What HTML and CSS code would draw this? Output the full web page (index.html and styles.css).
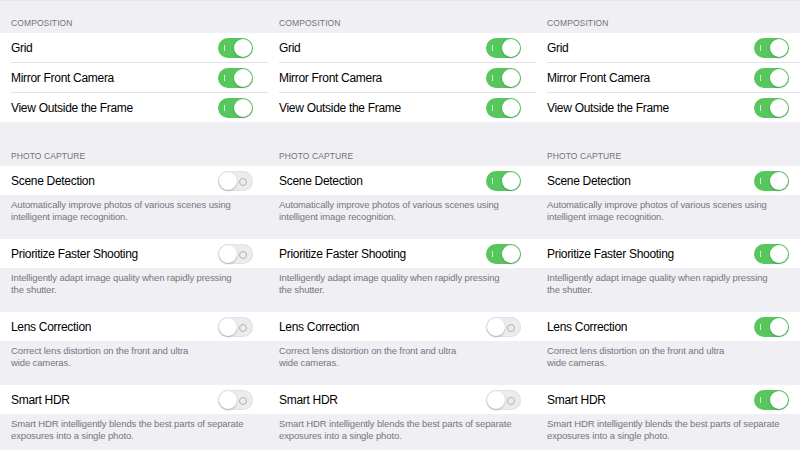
FILE: index.html
```html
<!DOCTYPE html>
<html>
<head>
<meta charset="utf-8">
<link rel="stylesheet" href="styles.css">
</head>
<body>
<div class="screen">
  <div class="col">
    <div class="hdr hdr-first">COMPOSITION</div>
    <div class="group">
      <div class="row"><div class="inner"><span class="label">Grid</span><span class="tg on"><span class="knob"></span></span></div></div>
      <div class="row"><div class="inner"><span class="label">Mirror Front Camera</span><span class="tg on"><span class="knob"></span></span></div></div>
      <div class="row"><div class="inner"><span class="label">View Outside the Frame</span><span class="tg on"><span class="knob"></span></span></div></div>
    </div>
    <div class="hdr hdr-second">PHOTO CAPTURE</div>
    <div class="row single"><div class="inner"><span class="label">Scene Detection</span><span class="tg off"><span class="knob"></span></span></div></div>
    <div class="desc">Automatically improve photos of various scenes using<br>intelligent image recognition.</div>
    <div class="row single"><div class="inner"><span class="label">Prioritize Faster Shooting</span><span class="tg off"><span class="knob"></span></span></div></div>
    <div class="desc">Intelligently adapt image quality when rapidly pressing<br>the shutter.</div>
    <div class="row single"><div class="inner"><span class="label">Lens Correction</span><span class="tg off"><span class="knob"></span></span></div></div>
    <div class="desc">Correct lens distortion on the front and ultra<br>wide cameras.</div>
    <div class="row single"><div class="inner"><span class="label">Smart HDR</span><span class="tg off"><span class="knob"></span></span></div></div>
    <div class="desc">Smart HDR intelligently blends the best parts of separate<br>exposures into a single photo.</div>
  </div>

  <div class="col">
    <div class="hdr hdr-first">COMPOSITION</div>
    <div class="group">
      <div class="row"><div class="inner"><span class="label">Grid</span><span class="tg on"><span class="knob"></span></span></div></div>
      <div class="row"><div class="inner"><span class="label">Mirror Front Camera</span><span class="tg on"><span class="knob"></span></span></div></div>
      <div class="row"><div class="inner"><span class="label">View Outside the Frame</span><span class="tg on"><span class="knob"></span></span></div></div>
    </div>
    <div class="hdr hdr-second">PHOTO CAPTURE</div>
    <div class="row single"><div class="inner"><span class="label">Scene Detection</span><span class="tg on"><span class="knob"></span></span></div></div>
    <div class="desc">Automatically improve photos of various scenes using<br>intelligent image recognition.</div>
    <div class="row single"><div class="inner"><span class="label">Prioritize Faster Shooting</span><span class="tg on"><span class="knob"></span></span></div></div>
    <div class="desc">Intelligently adapt image quality when rapidly pressing<br>the shutter.</div>
    <div class="row single"><div class="inner"><span class="label">Lens Correction</span><span class="tg off"><span class="knob"></span></span></div></div>
    <div class="desc">Correct lens distortion on the front and ultra<br>wide cameras.</div>
    <div class="row single"><div class="inner"><span class="label">Smart HDR</span><span class="tg off"><span class="knob"></span></span></div></div>
    <div class="desc">Smart HDR intelligently blends the best parts of separate<br>exposures into a single photo.</div>
  </div>

  <div class="col">
    <div class="hdr hdr-first">COMPOSITION</div>
    <div class="group">
      <div class="row"><div class="inner"><span class="label">Grid</span><span class="tg on"><span class="knob"></span></span></div></div>
      <div class="row"><div class="inner"><span class="label">Mirror Front Camera</span><span class="tg on"><span class="knob"></span></span></div></div>
      <div class="row"><div class="inner"><span class="label">View Outside the Frame</span><span class="tg on"><span class="knob"></span></span></div></div>
    </div>
    <div class="hdr hdr-second">PHOTO CAPTURE</div>
    <div class="row single"><div class="inner"><span class="label">Scene Detection</span><span class="tg on"><span class="knob"></span></span></div></div>
    <div class="desc">Automatically improve photos of various scenes using<br>intelligent image recognition.</div>
    <div class="row single"><div class="inner"><span class="label">Prioritize Faster Shooting</span><span class="tg on"><span class="knob"></span></span></div></div>
    <div class="desc">Intelligently adapt image quality when rapidly pressing<br>the shutter.</div>
    <div class="row single"><div class="inner"><span class="label">Lens Correction</span><span class="tg on"><span class="knob"></span></span></div></div>
    <div class="desc">Correct lens distortion on the front and ultra<br>wide cameras.</div>
    <div class="row single"><div class="inner"><span class="label">Smart HDR</span><span class="tg on"><span class="knob"></span></span></div></div>
    <div class="desc">Smart HDR intelligently blends the best parts of separate<br>exposures into a single photo.</div>
  </div>
</div>
</body>
</html>
```
FILE: styles.css
```css
* { box-sizing: border-box; margin: 0; padding: 0; }
html, body { width: 800px; height: 450px; overflow: hidden; }
body {
  background: #efeff4;
  font-family: "Liberation Sans", Arial, sans-serif;
  color: #000;
}
.screen {
  display: flex;
  width: 800px;
  height: 450px;
  overflow: hidden;
  border-top: 1px solid #e4e4e9;
}
.col {
  flex: 0 0 268px;
  width: 268px;
  display: flex;
  flex-direction: column;
}
.col > * { flex-shrink: 0; }
.hdr {
  display: flex;
  align-items: flex-end;
  padding-left: 11px;
  font-size: 8.5px;
  letter-spacing: 0.1px;
  color: #737378;
  line-height: 11px;
}
.hdr-first { height: 32px; padding-bottom: 4px; }
.hdr-second { height: 44px; padding-bottom: 4px; }
.group { background: #fff; }
.row {
  background: #fff;
  padding-left: 11px;
  height: 30px;
}
.row.single { height: 29px; }
.inner {
  height: 100%;
  display: flex;
  align-items: center;
  justify-content: space-between;
  padding-right: 15px;
  border-bottom: 1px solid #e3e3e7;
}
.group .row:last-child { height: 29px; }
.group .row:last-child .inner, .row.single .inner { border-bottom: none; }
.label { font-size: 12px; letter-spacing: -0.3px; }
.desc {
  height: 44px;
  padding: 4px 11px 0;
  font-size: 9.5px;
  letter-spacing: -0.12px;
  line-height: 12px;
  color: #76767b;
  white-space: nowrap;
}
.tg {
  position: relative;
  width: 35px;
  height: 20px;
  border-radius: 10px;
  flex: 0 0 35px;
}
.tg.on { background: #57c75d; }
.tg.off { background: #ececee; box-shadow: inset 0 0 0 1px #e2e2e5; }
.tg .knob {
  position: absolute;
  top: 1px;
  width: 18px;
  height: 18px;
  border-radius: 50%;
  background: #fff;
  box-shadow: 0 1px 2px rgba(0,0,0,0.25);
}
.tg.on .knob { right: 1px; }
.tg.off .knob { left: 1px; }
.tg.on::before {
  content: "";
  position: absolute;
  left: 6px;
  top: 7px;
  width: 1px;
  height: 6px;
  background: #fff;
  opacity: 0.8;
}
.tg.off::after {
  content: "";
  position: absolute;
  right: 6px;
  top: 7px;
  width: 6px;
  height: 6px;
  border-radius: 50%;
  border: 1px solid #b2b2b6;
}
```
